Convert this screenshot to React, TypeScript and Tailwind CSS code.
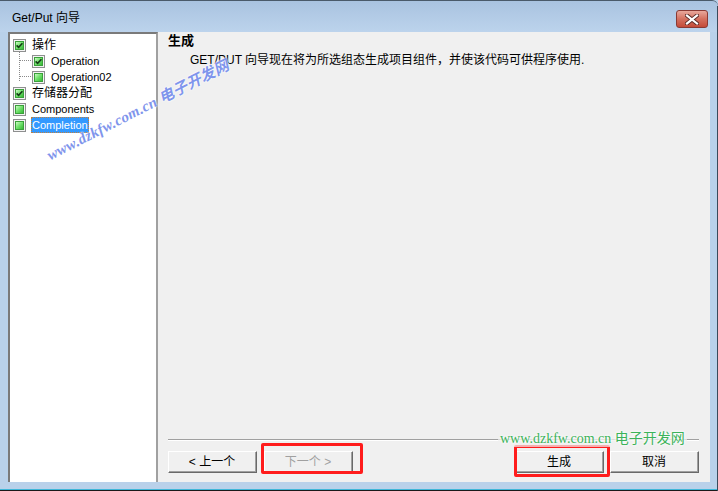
import React from "react";

const UI_FONT = "font-['Liberation_Sans','Noto_Sans_CJK_SC',sans-serif]";

function TreeCheck({ checked }: { checked: boolean }) {
  return (
    <svg width="13" height="13" viewBox="0 0 13 13" className="shrink-0">
      <defs>
        <linearGradient id="cbg" x1="0" y1="0" x2="1" y2="1">
          <stop offset="0" stopColor="#d8ffd0" />
          <stop offset="0.5" stopColor="#6fe06a" />
          <stop offset="1" stopColor="#2fb52f" />
        </linearGradient>
      </defs>
      <rect x="0.5" y="0.5" width="12" height="12" fill="#f4f4f4" stroke="#8e8f8f" />
      <rect x="2.5" y="2.5" width="8" height="8" fill="url(#cbg)" stroke="#3aa03a" />
      {checked && (
        <path d="M3.6 6.4 L5.6 8.4 L9.4 4.2" fill="none" stroke="#163a16" strokeWidth="1.6" />
      )}
    </svg>
  );
}

type Row = { label: string; level: 0 | 1; checked: boolean; selected?: boolean; cjk?: boolean };

const rows: Row[] = [
  { label: "操作", level: 0, checked: true, cjk: true },
  { label: "Operation", level: 1, checked: true },
  { label: "Operation02", level: 1, checked: false },
  { label: "存储器分配", level: 0, checked: true, cjk: true },
  { label: "Components", level: 0, checked: false },
  { label: "Completion", level: 0, checked: false, selected: true },
];

function TreeRow({ row }: { row: Row }) {
  return (
    <div className={`relative flex h-[16px] items-center ${row.level === 1 ? "pl-[22px]" : "pl-[3px]"}`}>
      {row.level === 1 && (
        <span className="absolute left-[10px] top-[7px] w-[11px] border-t border-dotted border-[#8a8a8a]" />
      )}
      <TreeCheck checked={row.checked} />
      <span
        className={`ml-[5px] h-[16px] px-[1px] leading-[16px] ${row.cjk ? "text-[12px]" : "text-[11px]"} ${
          row.selected
            ? "bg-[#3399ff] text-white outline outline-1 outline-dotted outline-[#c08040] -outline-offset-1"
            : "text-black"
        }`}
      >
        {row.label}
      </span>
    </div>
  );
}

function WinButton({ children, disabled }: { children: React.ReactNode; disabled?: boolean }) {
  return (
    <div className="h-[22px] w-[89px] border border-t-white border-l-white border-r-[#696969] border-b-[#696969] bg-[#f0f0f0]">
      <div
        className={`flex h-full w-full items-center justify-center border-r border-b border-[#a0a0a0] text-[12px] ${
          disabled ? "text-[#a0a0a0]" : "text-black"
        }`}
      >
        {children}
      </div>
    </div>
  );
}

function CloseButton() {
  return (
    <div className="h-[18px] w-[32px] rounded-[3px] border border-[#8a3a34] bg-gradient-to-b from-[#e8a89c] via-[#d4705f] to-[#c44a38] flex items-center justify-center">
      <svg width="14" height="11" viewBox="0 0 14 11">
        <path d="M2 1.5 L12 9.5 M12 1.5 L2 9.5" stroke="#5a2a26" strokeWidth="4" strokeLinecap="square" />
        <path d="M2 1.5 L12 9.5 M12 1.5 L2 9.5" stroke="#ffffff" strokeWidth="2.2" strokeLinecap="square" />
      </svg>
    </div>
  );
}

export default function App() {
  return (
    <div className={`relative h-[491px] w-[718px] overflow-hidden bg-[#b9d1ea] ${UI_FONT}`}>
      {/* title bar */}
      <div className="flex h-[32px] items-start justify-between bg-gradient-to-b from-[#a9c3e0] to-[#bcd3ec] pl-[12px] pr-[10px] border-t border-[#4a5a6a] rounded-tr-[6px]">
        <span className="mt-[9px] text-[12px] leading-[16px] text-black">Get/Put 向导</span>
        <div className="mt-[9px]">
          <CloseButton />
        </div>
      </div>

      {/* client area */}
      <div className="mx-[8px] flex h-[450px]">
        {/* navigation tree */}
        <div className="w-[150px] border-t-2 border-l-2 border-t-[#7a7a7a] border-l-[#7a7a7a] border-r-2 border-r-[#a0a0a0] bg-white pt-[3px]">
          <div className="relative">
            <span className="absolute left-[9px] top-[15px] h-[29px] border-l border-dotted border-[#8a8a8a]" />
            {rows.map((r) => (
              <TreeRow key={r.label} row={r} />
            ))}
          </div>
        </div>

        {/* page content */}
        <div className="flex flex-1 flex-col bg-[#f0f0f0] pl-[10px] pr-[11px]">
          <div className="mt-[1px] h-[16px] text-[13px] font-bold leading-[16px] text-black">生成</div>
          <div className="ml-[22px] mt-[3px] h-[16px] text-[12px] leading-[16px] text-black">
            GET/PUT 向导现在将为所选组态生成项目组件，并使该代码可供程序使用.
          </div>
          <div className="flex-1" />
          <div className="border-t border-[#a0a0a0] border-b border-b-white" />
          <div className="mb-[9px] mt-[10px] flex items-center">
            <WinButton>&lt; 上一个</WinButton>
            <div className="ml-[7px]">
              <WinButton disabled>下一个 &gt;</WinButton>
            </div>
            <div className="flex-1" />
            <WinButton>生成</WinButton>
            <div className="ml-[6px]">
              <WinButton>取消</WinButton>
            </div>
          </div>
        </div>
      </div>

      {/* bottom frame edge */}
      <div className="absolute bottom-0 left-0 right-0 h-[2px] border-t border-[#3fb6d8] bg-[#1a1a1a]" />
      <div className="absolute bottom-0 right-0 top-[6px] w-[1px] bg-[#3a4a5a]" />

      {/* highlight boxes */}
      <div className="pointer-events-none absolute left-[261px] top-[443px] h-[31px] w-[102px] rounded-[2px] border-[3px] border-[#ff1c1c]" />
      <div className="pointer-events-none absolute left-[514px] top-[445px] h-[32px] w-[96px] rounded-[2px] border-[3px] border-[#ff1c1c]" />

      {/* site marks */}
      <div className="pointer-events-none absolute left-[48px] top-[145px] origin-left -rotate-[27deg] whitespace-nowrap font-['Liberation_Serif','Noto_Sans_CJK_SC',serif] text-[15px] font-bold italic tracking-[0.3px] text-[#7f95ec] [text-shadow:0_0_2px_#ffffff,0_0_2px_#ffffff]">
        www.dzkfw.com.cn 电子开发网
      </div>
      <div className="pointer-events-none absolute left-[498px] top-[430px] whitespace-nowrap bg-[#f0f0f0]/70 px-[2px] font-['Liberation_Serif','Noto_Sans_CJK_SC',serif] text-[14px] leading-[17px] text-[#3cb35a] [text-shadow:0_0_3px_#ffffff,0_0_3px_#ffffff]">
        www.dzkfw.com.cn 电子开发网
      </div>
    </div>
  );
}
